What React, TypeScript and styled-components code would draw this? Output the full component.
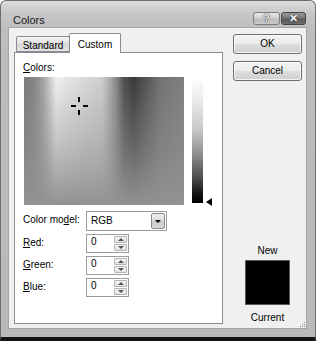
import React from 'react';
import styled, { createGlobalStyle } from 'styled-components';

const Global = createGlobalStyle`
  html, body { margin: 0; padding: 0; background: #ffffff; }
  body { width: 318px; height: 341px; overflow: hidden; font-family: "Liberation Sans", Arial, sans-serif; }
  * { box-sizing: border-box; }
`;

const Window = styled.div`
  width: 316px;
  height: 341px;
  display: flex;
  flex-direction: column;
  background: linear-gradient(to bottom, #dcdcdc 0px, #c8c8c8 12px, #bdbdbd 28px, #b9b9b9 100%);
  border: 1px solid #6e6e6e;
  border-bottom: 4px solid #141414;
  border-radius: 6px 6px 0 0;
`;

const TitleBar = styled.div`
  height: 27px;
  display: flex;
  align-items: flex-start;
  padding: 0 9px 0 12px;
`;

const Title = styled.div`
  font-size: 11px;
  line-height: 13px;
  margin-top: 13px;
  color: #1a1a1a;
`;

const CaptionButtons = styled.div`
  margin-left: auto;
  margin-top: 11px;
  display: flex;
  gap: 1px;
`;

const CaptionButton = styled.div<{ $dark?: boolean; $w: number }>`
  width: ${p => p.$w}px;
  height: 13px;
  border: 1px solid ${p => (p.$dark ? '#444' : '#7c7c7c')};
  border-radius: 3px;
  background: ${p =>
    p.$dark
      ? 'linear-gradient(to bottom, #9a9a9a 0%, #767676 45%, #5a5a5a 55%, #6c6c6c 100%)'
      : 'linear-gradient(to bottom, #e6e6e6 0%, #d0d0d0 45%, #bcbcbc 55%, #c8c8c8 100%)'};
  display: flex;
  align-items: center;
  justify-content: center;
  font-weight: bold;
  font-size: 11px;
  line-height: 11px;
  color: #f6f6f6;
  text-shadow: 0 0 1px #222, 0 0 1px #222;
`;

const Client = styled.div`
  flex: 1;
  margin: 0 8px 10px 7px;
  background: #f0f0f0;
  border: 1px solid #a4a4a4;
  display: flex;
  gap: 10px;
  padding: 5px 4px 4px 5px;
  position: relative;
`;

const TabArea = styled.div`
  width: 209px;
  display: flex;
  flex-direction: column;
`;

const TabRow = styled.div`
  height: 20px;
  display: flex;
  align-items: flex-end;
  padding-left: 2px;
  position: relative;
  z-index: 1;
`;

const Tab = styled.div<{ $active?: boolean }>`
  font-size: 10px;
  line-height: 12px;
  color: #000;
  border: 1px solid #898c95;
  border-radius: 2px 2px 0 0;
  height: ${p => (p.$active ? 20 : 16)}px;
  width: ${p => (p.$active ? 52 : 54)}px;
  margin-bottom: ${p => (p.$active ? 0 : 1)}px;
  padding-top: ${p => (p.$active ? 5 : 3)}px;
  text-align: center;
  background: ${p => (p.$active ? '#ffffff' : 'linear-gradient(to bottom, #f4f4f4, #e0e0e0 50%, #d6d6d6 51%, #e4e4e4)')};
  border-bottom: ${p => (p.$active ? 'none' : '1px solid #898c95')};
  margin-left: ${p => (p.$active ? -1 : 0)}px;
`;

const Panel = styled.div`
  flex: 1;
  margin-top: -1px;
  background: #ffffff;
  border: 1px solid #898c95;
  padding: 9px 8px 0 8px;
  display: flex;
  flex-direction: column;
`;

const Label = styled.div`
  font-size: 10px;
  line-height: 12px;
  color: #000;
`;

const SpectrumRow = styled.div`
  display: flex;
  margin-top: 3px;
  margin-left: 1px;
`;

const Spectrum = styled.div`
  width: 160px;
  height: 128px;
  position: relative;
  background:
    linear-gradient(to bottom, rgba(146,146,146,0) 0%, rgba(146,146,146,0.5) 55%, rgba(146,146,146,1) 100%),
    linear-gradient(to right,
      #7a7a7a 0px, #828282 8px, #909090 14px, #a8a8a8 20px, #cacaca 26px, #f0f0f0 32px,
      #e6e6e6 44px, #d8d8d8 62px, #cecece 78px, #b4b4b4 84px, #8a8a8a 92px,
      #4e4e4e 100px, #3a3a3a 110px, #545454 122px, #727272 136px, #808080 160px);
`;

const CrossPiece = styled.div`
  position: absolute;
  background: #000;
`;

const LumWrap = styled.div`
  display: flex;
  margin-left: 8px;
`;

const LumBar = styled.div`
  width: 11px;
  height: 122px;
  margin-top: 4px;
  background: linear-gradient(to bottom, #fafafa 0%, #ececec 15%, #c8c8c8 40%, #8e8e8e 60%, #4a4a4a 80%, #111 93%, #000 100%);
`;

const Arrow = styled.div`
  width: 0;
  height: 0;
  margin-left: 3px;
  margin-top: 121px;
  border-right: 6px solid #000;
  border-top: 4px solid transparent;
  border-bottom: 4px solid transparent;
`;

const Form = styled.div`
  display: grid;
  grid-template-columns: 63px auto;
  row-gap: 3px;
  margin-top: 5px;
  justify-items: start;
`;

const FieldLabel = styled(Label)`
  padding-top: 3px;
`;

const Select = styled.div`
  width: 81px;
  height: 20px;
  border: 1px solid #9c9c9c;
  background: #fff;
  display: flex;
  align-items: center;
  padding: 1px;
`;

const FieldText = styled.div`
  flex: 1;
  font-size: 10px;
  line-height: 12px;
  padding-left: 3px;
  color: #000;
`;

const DropButton = styled.div`
  width: 14px;
  height: 16px;
  border: 1px solid #8a8a8a;
  border-radius: 2px;
  background: linear-gradient(to bottom, #f0f0f0, #dcdcdc 50%, #c8c8c8 51%, #d6d6d6);
  display: flex;
  align-items: center;
  justify-content: center;
`;

const DownTri = styled.div`
  border-top: 3px solid #000;
  border-left: 3px solid transparent;
  border-right: 3px solid transparent;
`;

const SpinBox = styled.div`
  width: 43px;
  height: 19px;
  border: 1px solid #9c9c9c;
  background: #fff;
  display: flex;
  align-items: stretch;
  padding: 1px;
`;

const SpinButtons = styled.div`
  width: 13px;
  display: flex;
  flex-direction: column;
  gap: 1px;
`;

const SpinHalf = styled.div`
  flex: 1;
  border: 1px solid #b4b4b4;
  border-radius: 1px;
  background: linear-gradient(to bottom, #f4f4f4, #e2e2e2);
  display: flex;
  align-items: center;
  justify-content: center;
`;

const Tri = styled.div<{ $up?: boolean }>`
  border-left: 3px solid transparent;
  border-right: 3px solid transparent;
  ${p => (p.$up ? 'border-bottom: 3px solid #555;' : 'border-top: 3px solid #555;')}
`;

const RightCol = styled.div`
  width: 69px;
  display: flex;
  flex-direction: column;
  align-items: center;
`;

const Button = styled.div`
  width: 69px;
  height: 20px;
  border: 1px solid #6f6f6f;
  border-radius: 3px;
  background: linear-gradient(to bottom, #f4f4f4 0%, #ebebeb 48%, #dddddd 52%, #d0d0d0 100%);
  box-shadow: inset 0 0 0 1px rgba(255, 255, 255, 0.75);
  font-size: 10px;
  line-height: 18px;
  text-align: center;
  color: #000;
  & + & { margin-top: 7px; }
  &:first-child { margin-top: 1px; }
`;

const Preview = styled.div`
  margin-top: 164px;
  display: flex;
  flex-direction: column;
  align-items: center;
`;

const Swatch = styled.div`
  width: 45px;
  height: 45px;
  margin: 3px 0 7px 0;
  background: #000;
  border: 1px solid #5a5a5a;
`;

const Grip = styled.svg`
  position: absolute;
  right: 0;
  bottom: 0;
`;

function Spin({ value }: { value: string }) {
  return (
    <SpinBox>
      <FieldText>{value}</FieldText>
      <SpinButtons>
        <SpinHalf><Tri $up /></SpinHalf>
        <SpinHalf><Tri /></SpinHalf>
      </SpinButtons>
    </SpinBox>
  );
}

export default function App() {
  return (
    <>
      <Global />
      <Window>
        <TitleBar>
          <Title>Colors</Title>
          <CaptionButtons>
            <CaptionButton $w={27}>?</CaptionButton>
            <CaptionButton $w={25} $dark>✕</CaptionButton>
          </CaptionButtons>
        </TitleBar>
        <Client>
          <TabArea>
            <TabRow>
              <Tab>Standard</Tab>
              <Tab $active>Custom</Tab>
            </TabRow>
            <Panel>
              <Label><u>C</u>olors:</Label>
              <SpectrumRow>
                <Spectrum>
                  <CrossPiece style={{ left: 54, top: 20, width: 2, height: 5 }} />
                  <CrossPiece style={{ left: 54, top: 33, width: 2, height: 5 }} />
                  <CrossPiece style={{ left: 47, top: 28, width: 5, height: 2 }} />
                  <CrossPiece style={{ left: 59, top: 28, width: 5, height: 2 }} />
                </Spectrum>
                <LumWrap>
                  <LumBar />
                  <Arrow />
                </LumWrap>
              </SpectrumRow>
              <Form>
                <FieldLabel>Color mo<u>d</u>el:</FieldLabel>
                <Select>
                  <FieldText>RGB</FieldText>
                  <DropButton><DownTri /></DropButton>
                </Select>
                <FieldLabel><u>R</u>ed:</FieldLabel>
                <Spin value="0" />
                <FieldLabel><u>G</u>reen:</FieldLabel>
                <Spin value="0" />
                <FieldLabel><u>B</u>lue:</FieldLabel>
                <Spin value="0" />
              </Form>
            </Panel>
          </TabArea>
          <RightCol>
            <Button>OK</Button>
            <Button>Cancel</Button>
            <Preview>
              <Label>New</Label>
              <Swatch />
              <Label>Current</Label>
            </Preview>
          </RightCol>
          <Grip width="8" height="8" viewBox="0 0 8 8">
            <g fill="#8a8a8a">
              <rect x="6" y="2" width="1" height="1" />
              <rect x="4" y="4" width="1" height="1" />
              <rect x="6" y="4" width="1" height="1" />
              <rect x="2" y="6" width="1" height="1" />
              <rect x="4" y="6" width="1" height="1" />
              <rect x="6" y="6" width="1" height="1" />
            </g>
          </Grip>
        </Client>
      </Window>
    </>
  );
}
